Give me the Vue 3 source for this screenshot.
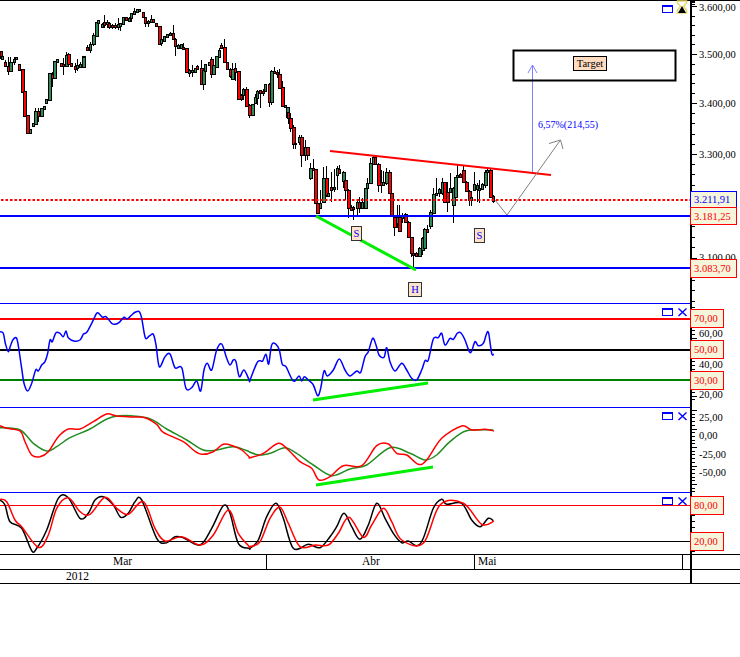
<script setup>
// zoomed-in readings, everything below is in 1/3 px units with an offset per block
const candleBlocks = [
  { ox: 0, oy: 0, rows: [
    [3,153,175,'r'],[7,168,177,'g'],[16,186,198,'r',180,200],[25,198,212,'r',172,225],[31,186,212,'g',172,212],
    [41,178,186,'g',170,195],[49,171,178,'g'],[58,193,210,'r'],[65,207,275,'r'],[73,273,347,'r'],[82,345,400,'r'],
    [91,387,400,'g'],[98,369,377,'g'],[106,334,372,'g',325,372],[115,334,347,'r',325,365],[123,325,347,'g'],[131,319,327,'g'],
    [139,297,309,'g',297,312],[148,219,299,'g'],[156,222,235,'r',215,262],[163,183,235,'g'],[172,178,185,'g'],[182,190,197,'r'],
    [190,192,198,'r',175,225],[197,165,198,'g',155,200],[205,163,193,'r',158,195],[214,189,197,'r'],[224,198,206,'r',190,218],
    [232,195,205,'g',178,212],[240,192,200,'g',185,205],[248,167,200,'g'],[253,167,172,'g'],[262,141,150,'r',136,152],
    [271,133,150,'g',125,160],[280,105,133,'g',98,137],[287,65,107,'g'],[295,60,68,'g'],[305,72,80,'g',70,85],[312,67,75,'r',45,85],
    [320,65,72,'g',60,85],[328,70,80,'r',65,88],[337,75,82,'r',72,87],[345,76,82,'r',70,87],[353,72,82,'g',55,90],[361,70,77,'g',68,92],
    [370,52,73,'g'],[378,52,60,'r'],[386,55,62,'g',52,65],[394,40,55,'g',38,65],[403,33,41,'g',25,43],[411,28,35,'g'],[418,28,33,'g'],
    [428,37,52,'r'],[436,52,70,'r',50,80],[444,63,70,'g',60,80],[452,58,65,'g',45,67],[460,58,65,'r'],[469,70,78,'r',68,80],
    [476,78,132,'r'],[484,118,130,'g',116,137],[492,107,122,'g'],[501,103,110,'g'],[509,98,105,'g',96,107],[518,100,118,'r',75,120],
    [526,118,138,'r',115,167],[535,135,143,'g',132,145],[542,133,143,'g'],[550,140,147,'r',128,149],[559,145,215,'r'],
    [567,210,218,'g',208,232],[575,210,217,'g',195,232],[584,205,215,'g'],[592,198,207,'r',196,209],[603,205,252,'r',180,254],
    [608,210,252,'g',208,270],[616,193,213,'g'],[626,187,195,'g'],[634,178,222,'r',172,235],[640,195,222,'g'],[649,168,200,'g'],
    [658,150,170,'g',145,172],[664,135,143,'r',130,145],[673,142,187,'r',118,189],[682,187,207,'r'],[691,207,228,'r',205,235],
    [697,207,238,'g',190,240],[705,205,215,'r',190,243],[715,213,296,'r'],[723,285,296,'r',283,303],[730,267,285,'g',265,300],
    [739,267,317,'r',262,319],
  ] },
  { ox: 750, oy: 0, rows: [
    [-2,314,345,'r',312,355],[5,313,344,'g',311,347],[14,291,309,'g',282,311],[22,273,293,'g',270,315],[31,271,278,'r',269,323],
    [40,273,280,'r',268,288],[46,252,273,'g'],[56,253,305,'r',250,320],[64,213,305,'g',211,315],[72,212,218,'r',202,220],
    [80,215,222,'r',210,235],[88,222,263,'r',207,265],[97,261,317,'r',243,319],[106,316,322,'g'],[110,322,352,'g'],[113,337,355,'r',335,372],
    [121,355,383,'r',338,395],[130,381,433,'r',375,448],[136,428,433,'g',426,446],[146,412,425,'g',405,435],[154,411,465,'r',405,501],
    [164,441,465,'g',420,482],[170,441,465,'r',440,480],
  ] },
  { ox: 900, oy: 420, rows: [
    [29,85,115,'g',70,120],[38,85,90,'r',58,92],[46,88,188,'r'],[52,188,220,'r'],[60,188,205,'g',150,208],[70,115,185,'g',80,190],
    [78,115,165,'r',78,170],[85,160,168,'g',115,172],[94,140,150,'r',95,185],[102,140,148,'g',88,155],[112,85,105,'g',78,150],
    [118,88,100,'r',75,102],[128,95,122,'g',92,145],[136,120,150,'r',118,180],[145,150,205,'r',148,235],[152,200,210,'r',195,212],
    [160,200,207,'r',198,240],[170,187,205,'g',180,225],[178,187,205,'r',170,220],[186,187,205,'g',175,208],[194,145,205,'g'],
    [202,130,145,'g',115,155],[210,70,130,'g',55,132],[218,52,72,'g',45,75],[226,52,72,'r',47,75],[234,72,135,'r',70,155],
    [242,125,135,'r',90,160],[250,125,135,'g',92,137],[258,95,130,'g',85,135],[266,95,160,'r',90,162],[274,160,228,'r',158,230],
    [282,232,262,'r',230,287],[290,232,248,'g',195,265],[298,232,272,'r',195,274],[306,225,235,'g',220,250],[316,222,245,'r',218,247],
    [325,245,292,'r',243,295],[332,292,340,'r',290,350],[340,340,345,'r',320,380],[348,340,347,'r',335,350],[356,325,347,'g',320,349],
    [365,295,330,'g',292,345],[372,268,325,'g',265,328],[381,268,277,'r',255,279],[390,215,258,'g',210,268],[400,163,218,'g',145,220],
    [408,158,165,'g',113,167],[416,148,160,'g',145,170],[425,127,158,'g',115,165],[433,127,185,'r',125,188],[441,155,185,'r',125,215],
    [450,145,157,'g',100,160],[458,145,195,'g',142,248],[464,112,172,'g',110,175],[472,105,112,'g',75,114],[480,102,110,'r',100,115],
    [490,90,125,'r',75,128],[498,125,152,'r',123,155],[506,152,180,'r',150,198],[514,172,180,'g',170,198],[522,132,150,'g',95,152],
    [530,135,147,'g',130,185],[538,145,150,'g',120,188],[546,132,148,'g',128,150],[555,95,135,'g',90,145],[562,90,97,'g',85,99],
    [570,90,170,'r',88,172],[578,168,182,'r',165,190],
  ] },
]

const candles = candleBlocks.flatMap(({ ox, oy, rows }) =>
  rows.map(([x, top, bot, kind, high, low]) => {
    const cx = Math.round((ox + x) / 3)
    const y1 = Math.round((oy + top) / 3)
    const y2 = Math.round((oy + bot) / 3)
    const h = Math.max(y2 - y1, 1)
    return {
      x: cx,
      y1,
      h,
      // long bodies show two pixels of colour, short ones only one
      w: h >= 8 ? 3 : 2,
      fill: kind === 'r' ? '#ff0000' : '#2e8b57',
      high: high ? Math.round((oy + high) / 3) : y1,
      low: low ? Math.round((oy + low) / 3) : y2,
    }
  })
)

// joins the left and right reading of a curve into real pixels
function toPx(oy, left, right) {
  const a = left.map(([x, y]) => [x / 3, oy + y / 3])
  const b = right.map(([x, y]) => [250 + x / 3, oy + y / 3])
  return [...a, ...b]
}

// catmull-rom through the points
function smooth(pts) {
  let d = `M${pts[0][0].toFixed(1)} ${pts[0][1].toFixed(1)}`
  for (let i = 0; i < pts.length - 1; i++) {
    const p0 = pts[i - 1] || pts[i]
    const p1 = pts[i]
    const p2 = pts[i + 1]
    const p3 = pts[i + 2] || p2
    const c1x = p1[0] + (p2[0] - p0[0]) / 6
    const c1y = p1[1] + (p2[1] - p0[1]) / 6
    const c2x = p2[0] - (p3[0] - p1[0]) / 6
    const c2y = p2[1] - (p3[1] - p1[1]) / 6
    d += ` C${c1x.toFixed(1)} ${c1y.toFixed(1)} ${c2x.toFixed(1)} ${c2y.toFixed(1)} ${p2[0].toFixed(1)} ${p2[1].toFixed(1)}`
  }
  return d
}

const rsi = smooth(toPx(295,
  [[0,110],[10,115],[16,145],[25,170],[32,150],[40,133],[50,130],[57,165],[65,220],[72,265],[83,288],[95,265],[107,225],[115,228],[125,210],[135,200],[143,175],[150,135],[157,140],[168,113],[180,115],[190,125],[198,108],[205,128],[222,138],[240,135],[250,118],[260,112],[275,85],[290,55],[298,57],[308,67],[318,65],[335,85],[345,88],[358,82],[372,67],[382,72],[395,60],[405,52],[418,50],[425,70],[436,128],[448,123],[460,118],[468,150],[478,215],[495,185],[510,177],[525,218],[545,218],[558,280],[575,278],[590,258],[602,288],[612,225],[622,205],[635,225],[650,165],[665,147],[680,190],[690,210],[700,195],[708,200],[718,245],[732,225],[748,256]],
  [[0,255],[20,205],[30,197],[38,198],[48,178],[56,207],[65,150],[78,148],[88,165],[97,208],[108,215],[130,258],[147,243],[155,258],[163,245],[175,255],[190,270],[203,302],[212,280],[222,228],[232,243],[250,225],[268,192],[285,225],[300,243],[320,228],[332,232],[345,185],[355,170],[368,130],[378,150],[387,180],[402,187],[410,158],[420,200],[435,228],[455,205],[470,225],[485,250],[500,255],[515,225],[525,197],[535,195],[550,132],[565,128],[575,115],[585,150],[600,130],[610,133],[622,115],[632,113],[645,135],[658,170],[665,168],[675,140],[685,152],[700,145],[710,115],[716,115],[725,175],[732,178]]
))

const macdFast = smooth(toPx(405,
  [[0,62],[20,70],[60,78],[75,110],[95,150],[120,155],[145,140],[175,95],[205,72],[240,72],[280,50],[320,27],[350,33],[400,36],[435,38],[470,58],[490,82],[550,110],[580,135],[605,148],[640,140],[670,118],[700,123],[725,135],[748,156]],
  [[0,158],[40,145],[85,115],[115,135],[150,170],[185,190],[207,225],[240,215],[280,182],[335,182],[380,122],[415,117],[440,145],[470,150],[505,178],[530,165],[575,100],[635,63],[665,75],[705,73],[732,78]]
))
const macdSlow = smooth(toPx(405,
  [[0,68],[60,75],[100,115],[140,138],[170,125],[210,98],[270,72],[340,35],[440,38],[500,72],[560,105],[610,135],[650,135],[700,125],[748,140]],
  [[0,142],[30,150],[65,143],[105,128],[140,145],[190,180],[245,212],[300,192],[350,180],[420,128],[480,145],[525,165],[560,150],[600,110],[650,77],[730,75]]
))
const stochK = smooth(toPx(405,
  [[0,285],[15,300],[30,350],[65,370],[95,437],[110,430],[140,375],[175,280],[205,278],[240,340],[265,325],[285,285],[310,275],[340,300],[362,337],[385,325],[405,290],[425,285],[470,400],[500,413],[525,395],[550,398],[600,420],[635,370],[670,302],[690,325],[715,415],[748,430]],
  [[0,430],[25,405],[50,335],[78,295],[100,340],[130,430],[175,418],[210,428],[240,395],[260,365],[282,325],[305,365],[330,403],[355,360],[380,295],[405,340],[430,385],[455,413],[475,408],[500,422],[520,400],[550,310],[575,283],[590,298],[635,295],[665,345],[690,365],[715,340],[730,347]]
))
const stochD = smooth(toPx(405,
  [[0,283],[20,290],[45,345],[65,365],[115,427],[145,390],[170,310],[205,278],[240,320],[270,328],[315,277],[350,310],[385,328],[430,290],[465,370],[495,408],[545,395],[600,420],[640,390],[685,315],[715,385],[748,425]],
  [[0,425],[30,410],[60,340],[90,307],[115,355],[150,425],[195,420],[235,420],[265,385],[297,337],[340,397],[365,360],[400,310],[425,350],[455,405],[520,415],[570,300],[640,295],[695,358],[732,348]]
))

// evenly divided axis ticks between two anchors, major ones carry a label
function ticks(first, step, count, every) {
  const out = []
  for (let i = 0; i < count; i++) {
    out.push({ y: Math.round(first + step * i), major: i % every === 0 })
  }
  return out
}

const priceAnchors = [-3, 6, 54, 103, 154, 205, 258, 312]
const priceTicks = []
for (let i = 0; i < priceAnchors.length - 1; i++) {
  const step = (priceAnchors[i + 1] - priceAnchors[i]) / 5
  for (let j = 0; j < 5; j++) {
    priceTicks.push({ y: Math.round(priceAnchors[i] + step * j), major: j === 0 && i > 0 })
  }
}

const panels = [
  {
    id: 'main', top: 0, h: 304, border: 303,
    ticks: priceTicks,
    labels: [['3.600,00', 7], ['3.500,00', 54], ['3.400,00', 103], ['3.300,00', 154], ['3.100,00', 257]],
    tags: [
      { text: '3.211,91', y: 191, h: 16, w: 46, blue: true },
      { text: '3.181,25', y: 207, h: 17, w: 46 },
      { text: '3.083,70', y: 259, h: 18, w: 46 },
    ],
    iconY: 5, close: false,
  },
  {
    id: 'rsi', top: 304, h: 104, border: 407,
    ticks: ticks(307, 3.85, 25, 4).map((t, i) => ({ ...t, major: i % 5 === 3 })),
    labels: [['60,00', 333], ['40,00', 364], ['20,00', 394]],
    tags: [
      { text: '70,00', y: 309, h: 18, w: 33 },
      { text: '50,00', y: 340, h: 18, w: 33 },
      { text: '30,00', y: 371, h: 18, w: 33 },
    ],
    iconY: 308, close: true,
  },
  {
    id: 'macd', top: 408, h: 85, border: 492,
    ticks: ticks(410, 3.7, 23, 5),
    labels: [['25,00', 417], ['0,00', 435], ['-25,00', 454], ['-50,00', 472]],
    tags: [],
    iconY: 412, close: true,
  },
  {
    id: 'stoch', top: 493, h: 61, border: null,
    ticks: ticks(497, 6, 10, 100),
    labels: [],
    tags: [
      { text: '80,00', y: 496, h: 18, w: 33 },
      { text: '20,00', y: 532, h: 18, w: 33 },
    ],
    iconY: 497, close: true,
  },
]

const markers = [
  { text: 'S', x: 351, y: 226, w: 10, h: 14 },
  { text: 'S', x: 474, y: 228, w: 10, h: 14 },
  { text: 'H', x: 408, y: 282, w: 13, h: 14 },
]
</script>

<template>
  <div class="chart">
    <svg
      v-for="p in panels"
      :key="p.id"
      class="panel"
      width="740"
      :height="p.h"
      :viewBox="`0 ${p.top} 740 ${p.h}`"
    >
      <template v-if="p.id === 'main'">
        <rect x="0" y="0" width="740" height="1" fill="#000" />
        <g class="crisp">
          <g v-for="(c, i) in candles" :key="i">
            <rect :x="c.x" :y="c.high" width="1" :height="c.low - c.high" fill="#000" />
            <rect :x="c.x - 0.5" :y="c.y1 + 0.5" :width="c.w" :height="c.h" :fill="c.fill" stroke="#000" />
          </g>
        </g>
        <line class="level-dots" x1="1" y1="200" x2="690" y2="200" />
        <line class="level" x1="0" y1="216" x2="690" y2="216" />
        <line class="level" x1="0" y1="268" x2="690" y2="268" />
        <line class="trend-red" x1="330" y1="151" x2="551" y2="175" />
        <line class="trend-green" x1="316" y1="216" x2="416" y2="270" />
        <path class="target-arrow" d="M532.5 172V65M528 73l4.5-8 4.5 8" />
        <path class="scenario" d="M495 200L507 215L560.5 140M549 143.500L560.5 140L563 149" />
        <text class="note" x="538" y="128">6,57%(214,55)</text>
        <rect class="target-box" x="513.500" y="50.500" width="162" height="30" />
        <rect class="marker-box target-tag" x="573.500" y="56.500" width="33" height="14" />
        <text class="value" x="590" y="67" text-anchor="middle">Target</text>
        <g v-for="(m, i) in markers" :key="i">
          <rect class="marker-box" :x="m.x + 0.5" :y="m.y + 0.5" :width="m.w" :height="m.h" />
          <text class="marker-text" :x="m.x + m.w / 2 + 0.5" :y="m.y + 11" text-anchor="middle">{{ m.text }}</text>
        </g>
        <!-- hourglass -->
        <path class="hourglass" d="M677.500 1h9v2l-3 3.500 3 3.500v3h-9v-3l3-3.500-3-3.500z" />
        <path d="M682 6l4 7h-8z" fill="#000" />
      </template>

      <template v-if="p.id === 'rsi'">
        <rect x="0" y="318" width="690" height="2" fill="#ff0000" />
        <rect x="0" y="349" width="690" height="2" fill="#000" />
        <rect x="0" y="379" width="690" height="2" fill="#008000" />
        <path class="curve blue" :d="rsi" />
        <line class="trend-green" x1="313" y1="400" x2="428" y2="383" />
      </template>

      <template v-if="p.id === 'macd'">
        <path class="curve green" :d="macdSlow" />
        <path class="curve red" :d="macdFast" />
        <line class="trend-green" x1="316" y1="485" x2="433" y2="467" />
      </template>

      <template v-if="p.id === 'stoch'">
        <rect x="0" y="505" width="690" height="1" fill="#ff0000" />
        <rect x="0" y="541" width="690" height="1" fill="#000" />
        <path class="curve black" :d="stochK" />
        <path class="curve red" :d="stochD" />
      </template>

      <rect v-if="p.border" x="0" :y="p.border" width="690" height="1" fill="#0000ff" />
      <rect x="690" :y="p.top" width="2" :height="p.h" fill="#000" />
      <rect
        v-for="(t, i) in p.ticks"
        :key="i"
        x="692"
        :y="t.y"
        :width="t.major ? 5 : 3"
        height="1"
        fill="#000"
      />
      <text
        v-for="l in p.labels"
        :key="l[0]"
        class="value"
        x="699"
        :y="l[1] + 3.5"
      >{{ l[0] }}</text>

      <rect class="max-box" x="662.500" :y="p.iconY + 0.5" width="10" height="7" />
      <rect x="662" :y="p.iconY" width="11" height="2" fill="#0000ff" />
      <path v-if="p.close" class="close-x" :d="`M678.500 ${p.iconY + 0.5}l8 7.500m0-7.500l-8 7.500`" />

      <g v-for="t in p.tags" :key="t.text">
        <rect
          class="tag"
          :class="{ 'tag--blue': t.blue }"
          x="690.500"
          :y="t.y + 0.5"
          :width="t.w"
          :height="t.h"
        />
        <text
          class="value"
          :class="t.blue ? 'value--blue' : 'value--red'"
          x="694"
          :y="t.y + t.h / 2 + 4"
        >{{ t.text }}</text>
      </g>
    </svg>

    <div class="time-row months">
      <div class="cell mar">Mar</div>
      <div class="cell abr">Abr</div>
      <div class="cell mai">Mai</div>
      <div class="cell stub"></div>
      <div class="cell axis"></div>
    </div>
    <div class="time-row years">
      <div class="cell year">2012</div>
      <div class="cell axis"></div>
    </div>
  </div>
</template>

<style scoped>
.chart {
  width: 740px;
  height: 657px;
  background: #fff;
  font-family: "Liberation Serif", "Times New Roman", serif;
  overflow: hidden;
}
.panel {
  display: block;
}
.crisp {
  shape-rendering: crispEdges;
}
.level {
  stroke: #0000ff;
  stroke-width: 2;
}
.level-dots {
  stroke: #ff0000;
  stroke-width: 2;
  stroke-dasharray: 2.5 2;
}
.trend-red {
  stroke: #ff0000;
  stroke-width: 2;
}
.trend-green {
  stroke: #00ee00;
  stroke-width: 3;
}
.target-arrow {
  fill: none;
  stroke: #8080ff;
}
.scenario {
  fill: none;
  stroke: #808080;
}
.note {
  font-size: 10px;
  fill: #0000ff;
}
.target-box {
  fill: none;
  stroke: #000;
  stroke-width: 2;
}
.marker-box {
  fill: #fde3ca;
  stroke: #333;
}
.target-tag {
  fill: #ffdcc0;
  stroke: #000;
}
.marker-text {
  font-size: 10.5px;
  fill: #0000ff;
}
.hourglass {
  fill: #fff;
  stroke: #e6d96a;
  stroke-width: 1.5;
}
.value {
  font-size: 10.5px;
  fill: #000;
}
.value--red {
  fill: #ff0000;
}
.value--blue {
  fill: #0000ff;
}
.tag {
  fill: #f5f5dc;
  stroke: #ff0000;
}
.tag--blue {
  stroke: #0000ff;
}
.curve {
  fill: none;
  stroke-width: 1.5;
  stroke-linejoin: round;
}
.curve.blue { stroke: #0000ff; }
.curve.green { stroke: #228b22; }
.curve.red { stroke: #ff0000; }
.curve.black { stroke: #000; }
.max-box {
  fill: none;
  stroke: #0000ff;
}
.close-x {
  fill: none;
  stroke: #0000ff;
  stroke-width: 1.4;
}
.time-row {
  display: flex;
  font-size: 11.5px;
  line-height: 13px;
  color: #000;
}
.months {
  height: 14px;
  border-top: 1px solid #000;
  border-bottom: 1px solid #000;
}
.years {
  height: 13px;
  border-bottom: 1px solid #000;
}
.cell {
  box-sizing: border-box;
}
.mar {
  width: 266px;
  padding-left: 113px;
}
.abr {
  width: 208px;
  padding-left: 95px;
  border-left: 1px solid #000;
}
.mai {
  width: 208px;
  padding-left: 3px;
  border-left: 1px solid #000;
}
.stub {
  width: 8px;
  border-left: 1px solid #000;
}
.axis {
  width: 50px;
  border-left: 2px solid #000;
}
.year {
  width: 690px;
  padding-left: 66px;
}
</style>

<style>
html, body {
  background: #fff;
}
</style>
